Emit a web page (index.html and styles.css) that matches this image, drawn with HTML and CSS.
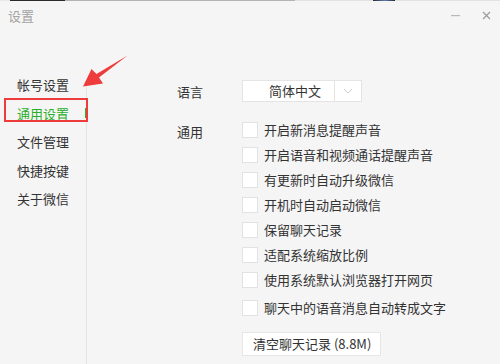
FILE: index.html
```html
<!DOCTYPE html>
<html lang="zh-CN">
<head>
<meta charset="utf-8">
<title>设置</title>
<link rel="stylesheet" href="styles.css">
</head>
<body>
<div class="strip"></div>
<header class="titlebar">
  <span class="title">设置</span>
  <div class="winctl">
    <svg class="ic-min" width="10" height="3" viewBox="0 0 10 3"><rect x="0" y="1" width="9" height="1.2" fill="#b8b8b8"/></svg>
    <svg class="ic-close" width="9" height="9" viewBox="0 0 9 9"><path d="M1 1L8 8M8 1L1 8" stroke="#9a9a9a" stroke-width="1.2" fill="none"/></svg>
  </div>
</header>
<main class="main">
  <nav class="sidebar">
    <div class="nav-item">帐号设置</div>
    <div class="nav-item active">通用设置<span class="indicator"></span><span class="mark"></span></div>
    <div class="nav-item">文件管理</div>
    <div class="nav-item">快捷按键</div>
    <div class="nav-item">关于微信</div>
  </nav>
  <section class="content">
    <div class="row lang-row">
      <div class="label">语言</div>
      <div class="select">
        <span class="select-text">简体中文</span>
        <span class="select-arrow"><svg width="10" height="6" viewBox="0 0 10 6"><polyline points="1,1 5,5 9,1" fill="none" stroke="#cfcfcf" stroke-width="1"/></svg></span>
      </div>
    </div>
    <div class="row general-row">
      <div class="label label-general">通用</div>
      <div class="options">
        <label class="opt"><span class="box"></span>开启新消息提醒声音</label>
        <label class="opt"><span class="box"></span>开启语音和视频通话提醒声音</label>
        <label class="opt"><span class="box"></span>有更新时自动升级微信</label>
        <label class="opt"><span class="box"></span>开机时自动启动微信</label>
        <label class="opt"><span class="box"></span>保留聊天记录</label>
        <label class="opt"><span class="box"></span>适配系统缩放比例</label>
        <label class="opt"><span class="box"></span>使用系统默认浏览器打开网页</label>
        <label class="opt opt-last"><span class="box"></span>聊天中的语音消息自动转成文字</label>
        <button class="btn">清空聊天记录 (8.8M)</button>
      </div>
    </div>
  </section>
</main>
<svg class="arrow" width="50" height="40" viewBox="80 50 50 40">
  <polygon points="83,86.5 91.5,69 96.5,74 127.5,55.5 99,77.5 103,83.5" fill="#ee3b3b"/>
</svg>
</body>
</html>
```

FILE: styles.css
```css
html, body {
  margin: 0;
  padding: 0;
}
body {
  width: 500px;
  height: 364px;
  overflow: hidden;
  background: #f5f5f5;
  font-family: "Noto Sans CJK SC", "Noto Sans", sans-serif;
  font-size: 13px;
  color: #333;
  position: relative;
}
.strip {
  height: 1px;
  background: linear-gradient(to right,
    #e8e8e8 0, #e8e8e8 10px,
    #2a2a2a 10px, #2a2a2a 65px,
    #b4b4b4 65px, #b4b4b4 295px,
    #e2e2e2 295px, #e2e2e2 373px,
    #2a2a2a 373px, #5a7ab0 385px, #2a2a2a 395px,
    #e2e2e2 395px);
}
.titlebar {
  height: 29px;
  display: flex;
  align-items: center;
  justify-content: space-between;
  padding: 0 9px 0 8px;
}
.title {
  color: #a3a3a3;
  line-height: 29px;
}
.winctl {
  display: flex;
  align-items: center;
  gap: 21px;
}
.ic-min { display: block; margin-top: 0px; }
.ic-close { display: block; margin-top: -1px; }

.main {
  display: flex;
  height: 334px;
}
.sidebar {
  width: 87px;
  flex: none;
  padding-top: 41px;
  box-sizing: border-box;
  background: linear-gradient(#e3e3e3, #e3e3e3) no-repeat right 0 top 54px / 1px 100%;
}
.nav-item {
  height: 28.5px;
  line-height: 28.5px;
  padding-left: 17px;
  color: #333;
  position: relative;
}
.nav-item.active {
  color: #2bae2b;
}
.indicator {
  position: absolute;
  left: 85px;
  top: 8.5px;
  width: 2px;
  height: 10px;
  background: #2bae2b;
}
.mark {
  position: absolute;
  left: 4px;
  top: -1.5px;
  width: 84px;
  height: 24px;
  box-sizing: border-box;
  border: 2px solid #ee3b3b;
}
.arrow {
  position: absolute;
  left: 80px;
  top: 50px;
}

.content {
  flex: 1;
  padding: 50px 0 0 90px;
}
.row {
  display: flex;
}
.label {
  width: 65px;
  flex: none;
}
.lang-row {
  align-items: center;
  height: 22px;
}
.select {
  width: 120px;
  height: 22px;
  box-sizing: border-box;
  background: #fff;
  border: 1px solid #e4e4e4;
  display: flex;
}
.select-text {
  width: 92px;
  box-sizing: border-box;
  border-right: 1px solid #e4e4e4;
  padding-left: 26px;
  line-height: 20px;
}
.select-arrow {
  flex: 1;
  display: flex;
  align-items: center;
  justify-content: center;
}
.select-arrow svg { display: block; }

.general-row {
  margin-top: 20px;
}
.label-general {
  line-height: 16px;
  padding-top: 2px;
}
.options {
  display: flex;
  flex-direction: column;
  align-items: flex-start;
  gap: 9px;
}
.opt {
  display: flex;
  align-items: center;
  height: 16px;
  line-height: 16px;
  gap: 6px;
  white-space: nowrap;
}
.opt-last {
  margin-top: 3px;
}
.box {
  width: 16px;
  height: 16px;
  box-sizing: border-box;
  background: #fff;
  border: 1px solid #e2e2e2;
  flex: none;
}
.btn {
  margin-top: 7px;
  width: 139px;
  height: 24px;
  box-sizing: border-box;
  background: #fff;
  border: 1px solid #e6e6e6;
  font-family: "Noto Sans CJK SC", "Noto Sans", sans-serif;
  font-size: 13px;
  color: #333;
  padding: 0 0 0 10px;
  text-align: left;
  line-height: 22px;
}
```
